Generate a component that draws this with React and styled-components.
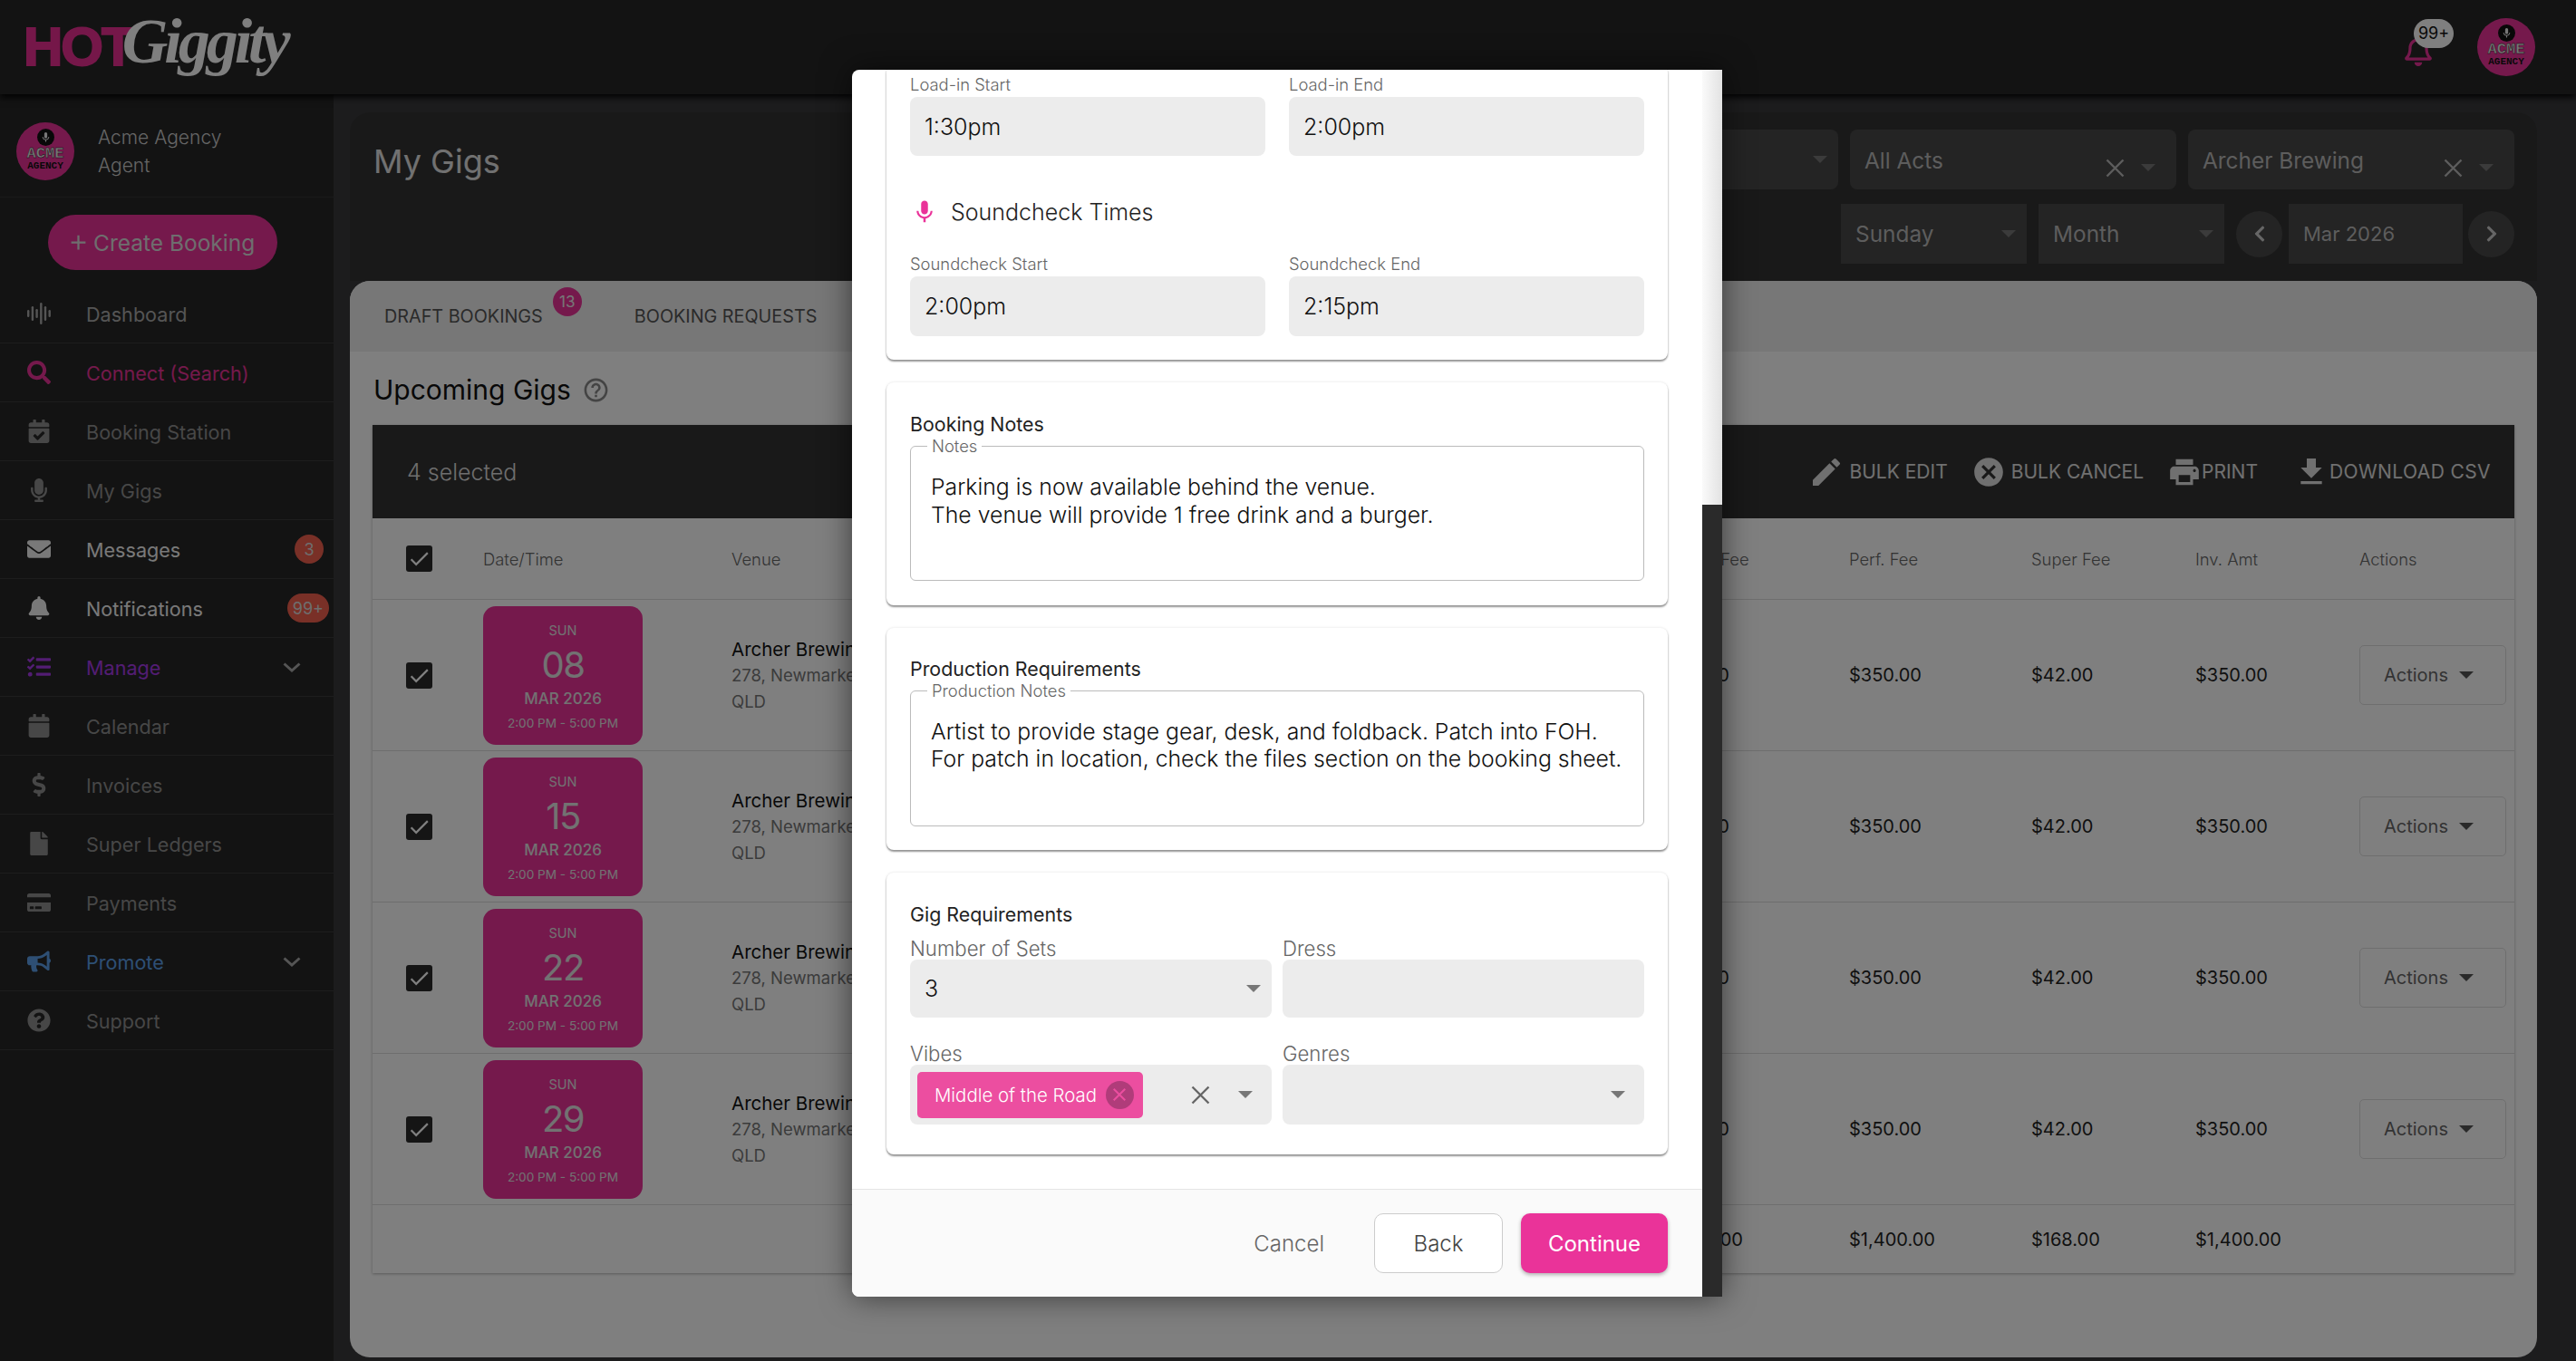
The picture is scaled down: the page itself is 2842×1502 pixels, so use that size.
import React from "react";
import styled, { createGlobalStyle } from "styled-components";
import {
	FaBell,
	FaBullhorn,
	FaCalendar,
	FaCalendarCheck,
	FaChevronLeft,
	FaChevronRight,
	FaCreditCard,
	FaDollarSign,
	FaEnvelope,
	FaFile,
	FaMicrophone,
	FaQuestionCircle,
	FaRegBell,
	FaSearch,
	FaTasks
} from "react-icons/fa";
import { MdAdd, MdCancel, MdCheck, MdClose, MdEdit, MdFileDownload, MdHelpOutline, MdMic, MdPrint } from "react-icons/md";

const FONT = `Inter, "Noto Sans", "Liberation Sans", sans-serif`;

const GlobalStyle = createGlobalStyle`
	html, body {
		margin: 0;
		padding: 0;
		width: 2842px;
		height: 1502px;
		overflow: hidden;
		background: #262626;
		font-family: ${FONT};
	}
	* {
		box-sizing: border-box;
	}
`;

const Page = styled.div`
	position: relative;
	width: 2842px;
	height: 1502px;
	display: grid;
	grid-template-rows: 104px 1fr;
	overflow: hidden;
`;

const Header = styled.header`
	display: flex;
	align-items: center;
	justify-content: space-between;
	padding: 0 45px 0 26px;
	background: #262626;
	box-shadow: 0 3px 8px #000;
	z-index: 1;
`;

const Logo = styled.div`
	display: flex;
	align-items: flex-start;
	height: 84px;
	white-space: nowrap;
`;

const LogoHot = styled.span`
	font-family: "Liberation Sans", sans-serif;
	font-size: 60px;
	font-weight: 700;
	line-height: 84px;
	letter-spacing: -2px;
	color: #ea2f93;
	-webkit-text-stroke: 2px #ea2f93;
`;

const LogoScript = styled.span`
	margin: -6px 0 0 -12px;
	font-family: "Liberation Serif", serif;
	font-size: 70px;
	font-style: italic;
	font-weight: 700;
	line-height: 84px;
	letter-spacing: -4px;
	color: #fff;
`;

const HeaderRight = styled.div`
	display: flex;
	align-items: center;
	gap: 48px;
`;

const BellWrap = styled.div`
	position: relative;
	width: 34px;
	height: 34px;
	margin-top: 8px;
	color: #ea3399;
	font-size: 34px;
	line-height: 0;
`;

const BellBadge = styled.span`
	position: absolute;
	top: -18px;
	left: 12px;
	display: flex;
	align-items: center;
	justify-content: center;
	width: 44px;
	height: 32px;
	border-radius: 16px;
	background: #fff;
	color: #111;
	font-size: 18px;
	line-height: 1;
`;

const AvatarDisc = styled.div`
	display: flex;
	flex-direction: column;
	align-items: center;
	flex: none;
	width: 64px;
	height: 64px;
	padding-top: 7px;
	border-radius: 50%;
	background: #ea3399;
`;

const AvatarMic = styled.div`
	display: flex;
	align-items: center;
	justify-content: center;
	width: 19px;
	height: 19px;
	border-radius: 50%;
	background: #111;
	color: #eee;
	font-size: 13px;
`;

const AvatarTop = styled.span`
	margin-top: 2px;
	font-family: "Liberation Mono", monospace;
	font-size: 17px;
	font-weight: 700;
	line-height: 14px;
	color: #eee;
	-webkit-text-stroke: 0.4px #111;
`;

const AvatarBottom = styled.span`
	margin-top: 1px;
	font-family: "Liberation Mono", monospace;
	font-size: 11px;
	font-weight: 700;
	line-height: 10px;
	color: #111;
`;

const Avatar = () => (
	<AvatarDisc>
		<AvatarMic>
			<MdMic />
		</AvatarMic>
		<AvatarTop>ACME</AvatarTop>
		<AvatarBottom>AGENCY</AvatarBottom>
	</AvatarDisc>
);

const Layout = styled.div`
	display: grid;
	grid-template-columns: 368px 1fr;
	min-height: 0;
`;

const Sidebar = styled.aside`
	background: #262626;
`;

const UserBlock = styled.div`
	display: flex;
	align-items: center;
	gap: 26px;
	height: 114px;
	padding: 12px 18px 0;
	border-bottom: 1px solid #343434;
`;

const UserText = styled.div`
	font-size: 21px;
	font-weight: 300;
	line-height: 31px;
	color: #ccc;
`;

const CreateButton = styled.button`
	display: flex;
	align-items: center;
	gap: 3px;
	width: 253px;
	height: 61px;
	margin: 19px 0 16px 53px;
	padding: 0 0 0 20px;
	border: 0;
	border-radius: 31px;
	background: #ea3399;
	color: #ddd;
	font-family: ${FONT};
	font-size: 24.5px;
	white-space: nowrap;

	svg {
		font-size: 27px;
	}
`;

const NavRow = styled.div`
	display: flex;
	align-items: center;
	height: 65px;
	padding-right: 11px;
	border-bottom: 1px solid #3a3a3a;
	color: ${props => props.$color || "#8f8f8f"};
	font-size: 21.6px;
`;

const NavIcon = styled.span`
	display: flex;
	align-items: center;
	justify-content: center;
	flex: none;
	width: 86px;
	margin-right: 9px;
	font-size: 26px;
`;

const NavLabel = styled.span`
	flex: 1;
	padding-top: 2px;
	white-space: nowrap;
`;

const NavBadge = styled.span`
	display: flex;
	align-items: center;
	justify-content: center;
	min-width: 32px;
	height: 32px;
	padding: 0 6px;
	margin-right: ${props => props.$wide ? "-6px" : "0"};
	border-radius: 16px;
	background: #f2604e;
	color: #ddd;
	font-size: 18px;
`;

const NavChevron = styled.svg`
	width: 20px;
	height: 11px;
	margin-right: 25px;
	stroke: #aaa;
	stroke-width: 3;
	fill: none;
`;

const WaveIcon = () => (
	<svg width="26" height="24" viewBox="0 0 26 24" fill="currentColor">
		<rect x="0" y="8" width="2.4" height="8" rx="1.2" />
		<rect x="4.7" y="4" width="2.4" height="16" rx="1.2" />
		<rect x="9.4" y="7" width="2.4" height="10" rx="1.2" />
		<rect x="14.1" y="0" width="2.4" height="24" rx="1.2" />
		<rect x="18.8" y="4" width="2.4" height="16" rx="1.2" />
		<rect x="23.5" y="8" width="2.4" height="8" rx="1.2" />
	</svg>
);

const Chevron = () => (
	<NavChevron viewBox="0 0 20 11">
		<polyline points="1.5,1.5 10,9 18.5,1.5" />
	</NavChevron>
);

const ClearSvg = styled.svg`
	display: block;
	flex: none;
	width: 21px;
	height: 21px;
	stroke: currentColor;
	stroke-width: 2.4;
	fill: none;
`;

const ClearIcon = () => (
	<ClearSvg viewBox="0 0 21 21">
		<path d="M1.5 1.5 L19.5 19.5 M19.5 1.5 L1.5 19.5" />
	</ClearSvg>
);

const Main = styled.main`
	display: flex;
	flex-direction: column;
	padding: 20px 43px 4px 18px;
	background: #39393b;
	min-width: 0;
`;

const FilterPanel = styled.section`
	display: flex;
	justify-content: space-between;
	height: 186px;
	padding: 19px 25px 0 26px;
	border-radius: 22px 22px 0 0;
	background: #333;
`;

const PageTitle = styled.h1`
	margin: 13px 0 0;
	font-size: 36px;
	font-weight: 400;
	color: #e2e2e2;
`;

const FilterRows = styled.div`
	display: flex;
	flex-direction: column;
	align-items: flex-end;
	gap: 16px;
`;

const FilterRow = styled.div`
	display: flex;
	align-items: center;
	gap: 13px;
`;

const FilterBox = styled.div`
	display: flex;
	align-items: center;
	justify-content: space-between;
	width: ${props => props.$width}px;
	height: 66px;
	padding: ${props => props.$padding || "0 12px 0 16px"};
	border-radius: ${props => props.$flat ? 0 : 8}px;
	background: #484848;
	color: #bbb;
	font-size: ${props => props.$small ? 22 : 24.4}px;
	white-space: nowrap;
`;

const FilterControls = styled.span`
	display: flex;
	align-items: center;
	gap: 18px;
	padding-top: 16px;
	color: #bbb;
`;

const Caret = styled.span`
	display: inline-block;
	flex: none;
	width: 0;
	height: 0;
	border-left: 8px solid transparent;
	border-right: 8px solid transparent;
	border-top: 8px solid ${props => props.$color || "#777"};
`;

const RoundButton = styled.div`
	display: flex;
	align-items: center;
	justify-content: center;
	width: 51px;
	height: 51px;
	margin: ${props => props.$margin};
	border-radius: 50%;
	background: #484848;
	color: #ccc;
	font-size: 20px;
`;

const Card = styled.section`
	flex: 1;
	display: flex;
	flex-direction: column;
	border-radius: 22px;
	background: #fff;
	overflow: hidden;
`;

const Tabs = styled.div`
	display: flex;
	align-items: center;
	height: 78px;
	padding-left: 38px;
	background: #eee;
`;

const Tab = styled.div`
	position: relative;
	margin-right: ${props => props.$gap}px;
	font-size: 19.8px;
	color: #555;
	white-space: nowrap;
`;

const TabBadge = styled.span`
	position: absolute;
	top: -20px;
	right: -43px;
	display: flex;
	align-items: center;
	justify-content: center;
	width: 32px;
	height: 32px;
	border-radius: 50%;
	background: #ea3399;
	color: #eee;
	font-size: 17px;
`;

const ActiveTab = styled.div`
	align-self: flex-end;
	width: 260px;
	height: 4px;
	margin: 0 0 1px -20px;
	background: #ea3399;
`;

const SectionHead = styled.div`
	display: flex;
	align-items: center;
	gap: 12px;
	height: 81px;
	padding: 3px 0 0 26px;
`;

const SectionTitle = styled.h2`
	margin: 0;
	font-size: 30px;
	font-weight: 400;
	color: #111;
`;

const HelpMark = styled.span`
	display: flex;
	color: #888;
	font-size: 31px;
`;

const TableWrap = styled.div`
	margin: 0 25px;
	box-shadow: 0 1px 3px rgba(0, 0, 0, 0.3);
`;

const BulkBar = styled.div`
	display: flex;
	align-items: center;
	justify-content: space-between;
	height: 103px;
	padding: 0 26px 0 38px;
	background: #333;
	color: #ddd;
`;

const BulkCount = styled.span`
	font-size: 25px;
	font-weight: 300;
`;

const BulkActions = styled.div`
	display: flex;
	align-items: center;
	gap: 26px;
`;

const BulkAction = styled.span`
	display: flex;
	align-items: center;
	gap: ${props => props.$gap || 0}px;
	margin-left: ${props => props.$push || 0}px;
	font-size: 21px;
	letter-spacing: ${props => props.$track || 0}px;
	white-space: nowrap;
	color: #e0e0e0;

	svg {
		font-size: ${props => props.$icon}px;
	}
`;

const Row = styled.div`
	display: grid;
	grid-template-columns: 122px 274px 1021px 212px 201px 181px 181px 171px;
	align-items: center;
	height: ${props => props.$height}px;
	border-top: ${props => props.$first ? 0 : "1px solid #ddd"};
	font-size: ${props => props.$head ? 18.4 : 20}px;
	font-weight: ${props => props.$head ? 300 : 400};
	color: ${props => props.$head ? "#666" : "#222"};
`;

const Check = styled.span`
	display: flex;
	align-items: center;
	justify-content: center;
	width: 29px;
	height: 29px;
	margin-left: 37px;
	border-radius: 3px;
	background: #2a2a2a;
	color: #fff;
	font-size: 27px;
`;

const DateCard = styled.div`
	display: flex;
	flex-direction: column;
	align-items: center;
	width: 176px;
	height: 153px;
	padding-top: 17px;
	border-radius: 14px;
	background: #ea3399;
	color: #e4e4e4;
`;

const DateDay = styled.span`
	font-size: 14.5px;
	line-height: 20px;
`;

const DateNum = styled.span`
	margin-top: 5px;
	font-size: 40px;
	line-height: 46px;
	letter-spacing: -1.5px;
`;

const DateMonth = styled.span`
	margin-top: 3px;
	font-size: 17px;
	font-weight: 500;
	line-height: 22px;
`;

const DateTime = styled.span`
	margin-top: 6px;
	font-size: 13.6px;
	line-height: 20px;
`;

const Venue = styled.div`
	font-size: 18.5px;
	line-height: 29px;
	color: #777;
	white-space: nowrap;
`;

const VenueName = styled.div`
	font-size: 20.5px;
	color: #111;
`;

const ActionsButton = styled.div`
	display: flex;
	align-items: center;
	gap: 12px;
	width: 162px;
	height: 66px;
	padding-left: 26px;
	border: 1px solid #ddd;
	border-radius: 5px;
	color: #666;
	font-size: 20px;
`;

// overlay and dialog sit on top of the page
const Backdrop = styled.div`
	position: absolute;
	inset: 0;
	z-index: 5;
	background: rgba(0, 0, 0, 0.5);
`;

const Dialog = styled.div`
	position: absolute;
	top: 77px;
	left: 940px;
	display: grid;
	grid-template-columns: 938px 22px;
	width: 960px;
	height: 1354px;
	border-radius: 8px 0 0 8px;
	box-shadow: 0 0 34px rgba(0, 0, 0, 0.55);
	overflow: hidden;
`;

const DialogColumn = styled.div`
	display: flex;
	flex-direction: column;
	min-height: 0;
	background: #fff;
`;

const DialogBody = styled.div`
	flex: 1;
	display: flex;
	flex-direction: column;
	justify-content: flex-end;
	gap: 25px;
	min-height: 0;
	padding: 0 38px 38px;
	overflow: hidden;
`;

const FormCard = styled.div`
	flex: none;
	padding: ${props => props.$padding};
	border-radius: 8px;
	background: #fff;
	box-shadow: 0 2px 2px rgba(0, 0, 0, 0.4), 0 0 3px rgba(0, 0, 0, 0.12);
`;

const FieldGrid = styled.div`
	display: grid;
	grid-template-columns: 1fr 1fr;
	column-gap: ${props => props.$gap}px;
	row-gap: ${props => props.$rowGap || 0}px;
	margin-top: ${props => props.$top || 0}px;
`;

const FieldLabel = styled.div`
	height: ${props => props.$large ? 24 : 22}px;
	margin-bottom: ${props => props.$large ? 0 : 3}px;
	font-size: ${props => props.$large ? 22.2 : 18.4}px;
	font-weight: 300;
	line-height: ${props => props.$large ? 24 : 22}px;
	color: #666;
`;

const Input = styled.div`
	display: flex;
	align-items: center;
	height: ${props => props.$height || 65}px;
	padding: ${props => props.$padding || "0 16px"};
	border-radius: 8px;
	background: #ececec;
	color: #111;
	font-size: 25px;
	font-weight: 300;
`;

const SoundHead = styled.div`
	display: flex;
	align-items: center;
	gap: 14px;
	height: 28px;
	margin: 48px 0 32px;
	color: #222;
	font-size: 25px;
	font-weight: 300;

	svg {
		margin-left: 1px;
		color: #ea3399;
		font-size: 30px;
	}
`;

const CardTitle = styled.div`
	height: 28px;
	font-size: 21.4px;
	line-height: 28px;
	color: #222;
`;

const NotesField = styled.fieldset`
	height: ${props => props.$height}px;
	margin: 0;
	padding: 20px 22px 0;
	border: 1px solid #bbb;
	border-radius: 6px;
`;

const NotesLegend = styled.legend`
	margin-left: -4px;
	padding: 0 5px;
	font-size: 18.4px;
	font-weight: 300;
	line-height: 20px;
	color: #666;
`;

const NotesText = styled.div`
	font-size: 24.8px;
	font-weight: 300;
	line-height: ${props => props.$line}px;
	color: #111;
	white-space: pre-line;
`;

const Spacer = styled.div`
	flex: 1;
`;

const Chip = styled.span`
	display: flex;
	align-items: center;
	gap: 10px;
	height: 51px;
	padding: 0 10px 0 19px;
	border-radius: 5px;
	background: #ec4ea0;
	color: #fff;
	font-size: 20.4px;
	white-space: nowrap;
`;

const ChipClose = styled.span`
	display: flex;
	align-items: center;
	justify-content: center;
	width: 31px;
	height: 31px;
	border-radius: 50%;
	background: #b03c7a;
	color: #ec4ea0;
	font-size: 24px;
`;

const ClearMark = styled.span`
	display: flex;
	margin-right: 31px;
	color: #666;
`;

const DialogFooter = styled.div`
	display: flex;
	align-items: center;
	justify-content: flex-end;
	height: 119px;
	padding: 0 38px;
	border-top: 1px solid #e4e4e4;
	background: #fafafa;
`;

const FooterText = styled.span`
	margin-right: 55px;
	color: #666;
	font-size: 24px;
	font-weight: 300;
`;

const FooterButton = styled.button`
	width: ${props => props.$primary ? 162 : 142}px;
	height: 66px;
	margin-left: ${props => props.$primary ? 20 : 0}px;
	border: ${props => props.$primary ? 0 : "1px solid #ccc"};
	border-radius: 10px;
	background: ${props => props.$primary ? "#ea3399" : "#fff"};
	box-shadow: ${props => props.$primary ? "0 2px 4px rgba(0, 0, 0, 0.3)" : "none"};
	color: ${props => props.$primary ? "#fff" : "#444"};
	font-family: ${FONT};
	font-size: 24px;
	font-weight: ${props => props.$primary ? 400 : 300};
`;

const ScrollTrack = styled.div`
	background: #2a2a2a;
`;

const ScrollThumb = styled.div`
	height: 480px;
	background: linear-gradient(90deg, #fafafa, #e2e2e2);
`;

const gigDays = ["08", "15", "22", "29"];

const navItems = [
	{ label: "Connect (Search)", icon: <FaSearch />, color: "#ea3399" },
	{ label: "Booking Station", icon: <FaCalendarCheck /> },
	{ label: "My Gigs", icon: <FaMicrophone /> },
	{ label: "Messages", icon: <FaEnvelope />, color: "#f2f2f2", badge: "3" },
	{ label: "Notifications", icon: <FaBell />, color: "#f2f2f2", badge: "99+" },
	{ label: "Manage", icon: <FaTasks />, color: "#a63be8", more: true },
	{ label: "Calendar", icon: <FaCalendar /> },
	{ label: "Invoices", icon: <FaDollarSign /> },
	{ label: "Super Ledgers", icon: <FaFile /> },
	{ label: "Payments", icon: <FaCreditCard /> },
	{ label: "Promote", icon: <FaBullhorn />, color: "#5c9fe8", more: true },
	{ label: "Support", icon: <FaQuestionCircle /> }
];

const App = () => {
	return (
		<Page>
			<GlobalStyle />
			<Header>
				<Logo>
					<LogoHot>HOT</LogoHot>
					<LogoScript>Giggity</LogoScript>
				</Logo>
				<HeaderRight>
					<BellWrap>
						<FaRegBell />
						<BellBadge>99+</BellBadge>
					</BellWrap>
					<Avatar />
				</HeaderRight>
			</Header>
			<Layout>
				<Sidebar>
					<UserBlock>
						<Avatar />
						<UserText>
							Acme Agency
							<br />
							Agent
						</UserText>
					</UserBlock>
					<CreateButton>
						<MdAdd />
						Create Booking
					</CreateButton>
					<NavRow $color="#aaa">
						<NavIcon>
							<WaveIcon />
						</NavIcon>
						<NavLabel>Dashboard</NavLabel>
					</NavRow>
					{navItems.map(item => (
						<NavRow key={item.label} $color={item.color}>
							<NavIcon>{item.icon}</NavIcon>
							<NavLabel>{item.label}</NavLabel>
							{item.badge && <NavBadge $wide={item.badge.length > 1}>{item.badge}</NavBadge>}
							{item.more && <Chevron />}
						</NavRow>
					))}
				</Sidebar>
				<Main>
					<FilterPanel>
						<PageTitle>My Gigs</PageTitle>
						<FilterRows>
							<FilterRow>
								<FilterBox $width={360}>
									<Spacer />
									<Caret />
								</FilterBox>
								<FilterBox $width={360} $padding="2px 23px 0 16px">
									All Acts
									<FilterControls>
										<ClearIcon />
										<Caret />
									</FilterControls>
								</FilterBox>
								<FilterBox $width={360} $padding="2px 23px 0 16px">
									Archer Brewing
									<FilterControls>
										<ClearIcon />
										<Caret />
									</FilterControls>
								</FilterBox>
							</FilterRow>
							<FilterRow>
								<FilterBox $width={205} $flat>
									Sunday
									<Caret />
								</FilterBox>
								<FilterBox $width={205} $flat>
									Month
									<Caret />
								</FilterBox>
								<RoundButton $margin="0 -6px 0 0">
									<FaChevronLeft />
								</RoundButton>
								<FilterBox $width={192} $flat $small>
									Mar 2026
								</FilterBox>
								<RoundButton $margin="0 0 0 -7px">
									<FaChevronRight />
								</RoundButton>
							</FilterRow>
						</FilterRows>
					</FilterPanel>
					<Card>
						<Tabs>
							<Tab $gap={101}>
								DRAFT BOOKINGS
								<TabBadge>13</TabBadge>
							</Tab>
							<Tab $gap={61}>BOOKING REQUESTS</Tab>
							<ActiveTab />
						</Tabs>
						<SectionHead>
							<SectionTitle>Upcoming Gigs</SectionTitle>
							<HelpMark>
								<MdHelpOutline />
							</HelpMark>
						</SectionHead>
						<TableWrap>
							<BulkBar>
								<BulkCount>4 selected</BulkCount>
								<BulkActions>
									<BulkAction $icon={40} $gap={5}>
										<MdEdit />
										BULK EDIT
									</BulkAction>
									<BulkAction $icon={38} $gap={6}>
										<MdCancel />
										BULK CANCEL
									</BulkAction>
									<BulkAction $icon={38}>
										<MdPrint />
										PRINT
									</BulkAction>
									<BulkAction $icon={40} $push={13} $track={0.4}>
										<MdFileDownload />
										DOWNLOAD CSV
									</BulkAction>
								</BulkActions>
							</BulkBar>
							<Row $height={89} $head $first>
								<Check>
									<MdCheck />
								</Check>
								<span>Date/Time</span>
								<span>Venue</span>
								<span>Agency Fee</span>
								<span>Perf. Fee</span>
								<span>Super Fee</span>
								<span>Inv. Amt</span>
								<span>Actions</span>
							</Row>
							{gigDays.map(day => (
								<Row key={day} $height={167}>
									<Check>
										<MdCheck />
									</Check>
									<DateCard>
										<DateDay>SUN</DateDay>
										<DateNum>{day}</DateNum>
										<DateMonth>MAR 2026</DateMonth>
										<DateTime>2:00 PM - 5:00 PM</DateTime>
									</DateCard>
									<Venue>
										<VenueName>Archer Brewing</VenueName>
										278, Newmarket
										<br />
										QLD
									</Venue>
									<span>$350.00</span>
									<span>$350.00</span>
									<span>$42.00</span>
									<span>$350.00</span>
									<ActionsButton>
										Actions
										<Caret $color="#555" />
									</ActionsButton>
								</Row>
							))}
							<Row $height={76}>
								<span />
								<span />
								<span />
								<span>$1,400.00</span>
								<span>$1,400.00</span>
								<span>$168.00</span>
								<span>$1,400.00</span>
							</Row>
						</TableWrap>
					</Card>
				</Main>
			</Layout>
			<Backdrop>
				<Dialog>
					<DialogColumn>
						<DialogBody>
							<FormCard $padding="10px 26px 26px">
								<FieldGrid $gap={26}>
									<div>
										<FieldLabel>Load-in Start</FieldLabel>
										<Input>1:30pm</Input>
									</div>
									<div>
										<FieldLabel>Load-in End</FieldLabel>
										<Input>2:00pm</Input>
									</div>
								</FieldGrid>
								<SoundHead>
									<MdMic />
									Soundcheck Times
								</SoundHead>
								<FieldGrid $gap={26}>
									<div>
										<FieldLabel>Soundcheck Start</FieldLabel>
										<Input $height={66}>2:00pm</Input>
									</div>
									<div>
										<FieldLabel>Soundcheck End</FieldLabel>
										<Input $height={66}>2:15pm</Input>
									</div>
								</FieldGrid>
							</FormCard>
							<FormCard $padding="32px 26px 27px">
								<CardTitle>Booking Notes</CardTitle>
								<NotesField $height={159}>
									<NotesLegend>Notes</NotesLegend>
									<NotesText $line={31}>
										{"Parking is now available behind the venue.\nThe venue will provide 1 free drink and a burger."}
									</NotesText>
								</NotesField>
							</FormCard>
							<FormCard $padding="31px 26px 26px">
								<CardTitle>Production Requirements</CardTitle>
								<NotesField $height={160}>
									<NotesLegend>Production Notes</NotesLegend>
									<NotesText $line={30}>
										{"Artist to provide stage gear, desk, and foldback. Patch into FOH.\nFor patch in location, check the files section on the booking sheet."}
									</NotesText>
								</NotesField>
							</FormCard>
							<FormCard $padding="32px 26px 33px">
								<CardTitle>Gig Requirements</CardTitle>
								<FieldGrid $gap={12} $rowGap={28} $top={12}>
									<div>
										<FieldLabel $large>Number of Sets</FieldLabel>
										<Input $height={64} $padding="0 12px 0 16px">
											3
											<Spacer />
											<Caret />
										</Input>
									</div>
									<div>
										<FieldLabel $large>Dress</FieldLabel>
										<Input $height={64} />
									</div>
									<div>
										<FieldLabel $large>Vibes</FieldLabel>
										<Input $height={66} $padding="0 21px 0 8px">
											<Chip>
												Middle of the Road
												<ChipClose>
													<MdClose />
												</ChipClose>
											</Chip>
											<Spacer />
											<ClearMark>
												<ClearIcon />
											</ClearMark>
											<Caret />
										</Input>
									</div>
									<div>
										<FieldLabel $large>Genres</FieldLabel>
										<Input $height={66} $padding="0 21px 0 8px">
											<Spacer />
											<Caret />
										</Input>
									</div>
								</FieldGrid>
							</FormCard>
						</DialogBody>
						<DialogFooter>
							<FooterText>Cancel</FooterText>
							<FooterButton>Back</FooterButton>
							<FooterButton $primary>Continue</FooterButton>
						</DialogFooter>
					</DialogColumn>
					<ScrollTrack>
						<ScrollThumb />
					</ScrollTrack>
				</Dialog>
			</Backdrop>
		</Page>
	);
};

export default App;
